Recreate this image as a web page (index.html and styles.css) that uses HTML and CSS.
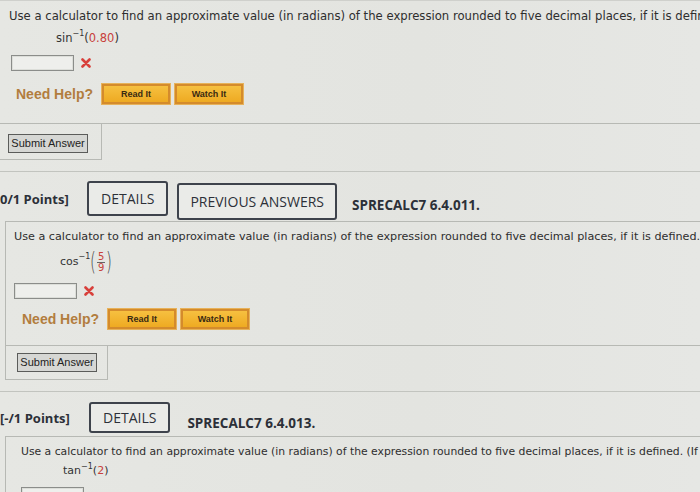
FILE: index.html
```html
<!DOCTYPE html>
<html lang="en">
<head>
<meta charset="utf-8">
<title>Inverse trig questions</title>
<link rel="stylesheet" href="styles.css">
</head>
<body>
<div class="page">
  <section class="q q-first">
    <div class="qbox">
      <p class="qtext">Use a calculator to find an approximate value (in radians) of the expression rounded to five decimal places, if it is defined.</p>
      <div class="expr">sin<sup>−1</sup>(<span class="red">0.80</span>)</div>
      <div class="answer">
        <span class="input"></span>
        <svg class="xmark" viewBox="0 0 10 10" width="10" height="10"><path d="M1.5 1.5 L8.5 8.5 M8.5 1.5 L1.5 8.5" stroke="#d8403b" stroke-width="2.6" stroke-linecap="round"/></svg>
      </div>
      <div class="help">
        <span class="need">Need Help?</span>
        <span class="hbtn">Read It</span>
        <span class="hbtn">Watch It</span>
      </div>
    </div>
    <div class="tab"><span class="submit">Submit Answer</span></div>
  </section>

  <div class="sep sep-first"></div>

  <section class="q q-mid">
    <div class="qhead">
      <span class="pts">0/1 Points]</span>
      <span class="tbtn">DETAILS</span>
      <span class="tbtn tbtn-wide">PREVIOUS ANSWERS</span>
      <span class="code">SPRECALC7 6.4.011.</span>
    </div>
    <div class="qbox">
      <p class="qtext">Use a calculator to find an approximate value (in radians) of the expression rounded to five decimal places, if it is defined.</p>
      <div class="expr expr-frac">cos<sup>−1</sup><span class="paren">(</span><span class="frac"><span class="red">5</span><span class="red bar">9</span></span><span class="paren">)</span></div>
      <div class="answer">
        <span class="input"></span>
        <svg class="xmark" viewBox="0 0 10 10" width="10" height="10"><path d="M1.5 1.5 L8.5 8.5 M8.5 1.5 L1.5 8.5" stroke="#d8403b" stroke-width="2.6" stroke-linecap="round"/></svg>
      </div>
      <div class="help">
        <span class="need">Need Help?</span>
        <span class="hbtn">Read It</span>
        <span class="hbtn">Watch It</span>
      </div>
    </div>
    <div class="tab"><span class="submit">Submit Answer</span></div>
  </section>

  <div class="sep"></div>

  <section class="q q-last">
    <div class="qhead">
      <span class="pts">[-/1 Points]</span>
      <span class="tbtn">DETAILS</span>
      <span class="code">SPRECALC7 6.4.013.</span>
    </div>
    <div class="qbox">
      <p class="qtext">Use a calculator to find an approximate value (in radians) of the expression rounded to five decimal places, if it is defined. (If it is not defined, enter UNDEFINED.)</p>
      <div class="expr">tan<sup>−1</sup>(<span class="red">2</span>)</div>
      <div class="answer">
        <span class="input"></span>
      </div>
    </div>
  </section>
</div>
</body>
</html>
```
FILE: styles.css
```css
html, body {
  margin: 0;
  padding: 0;
}
body {
  background: #e4e5e1;
  font-family: "DejaVu Sans", Verdana, sans-serif;
  color: #2b2b2b;
}
.page {
  width: 700px;
  height: 492px;
  overflow: hidden;
  background: linear-gradient(90deg, #e6e7e3 0%, #e3e4e0 60%, #e6e7e4 100%);
  border-top: 1px solid #cfd0cc;
  box-sizing: border-box;
}
.q {
  margin-left: 5px;
}
.q-first {
  margin-left: -3px;
}
.qbox {
  width: 900px;
  border: 1px solid #b7b9b4;
  border-right: none;
  padding: 7px 0 16px 8px;
}
.q-first .qbox {
  border-top: none;
  padding-top: 7px;
  padding-bottom: 19px;
  padding-left: 11px;
}
.q-last .qbox {
  padding-left: 15px;
}
.qtext {
  margin: 0;
  font-size: 11.2px;
  line-height: 16px;
  white-space: nowrap;
  color: #2e2e2e;
}
.q-first .qtext {
  font-size: 11.65px;
}
.q-last .qtext {
  font-size: 10.8px;
}
.expr {
  margin: 5px 0 0 47px;
  font-size: 11px;
  line-height: 18px;
  height: 18px;
  display: flex;
  align-items: center;
  color: #333;
}
.q-first .expr {
  font-size: 11.5px;
}
.q-last .expr {
  margin-top: 2px;
  margin-left: 42px;
}
.expr sup {
  font-size: 8px;
  line-height: 8px;
  align-self: flex-start;
  margin-top: 1px;
}
.red {
  color: #c8413b;
}
.expr-frac {
  height: 22px;
  margin-top: 6px;
  margin-left: 46px;
}
.expr-frac sup {
  margin-top: 2px;
}
.paren {
  font-size: 25px;
  line-height: 24px;
  font-weight: 300;
  color: #444;
  transform: scaleX(0.6);
  margin: 0 -2px;
}
.frac {
  display: inline-flex;
  flex-direction: column;
  align-items: center;
  font-size: 10px;
  line-height: 10px;
  padding: 0 1px;
}
.frac .bar {
  border-top: 1px solid #666;
  padding: 0 1px;
}
.answer {
  margin-top: 7px;
  display: flex;
  align-items: center;
  gap: 7px;
  height: 17px;
}
.q-mid .answer {
  margin-top: 9px;
}
.q-last .answer {
  margin-top: 6px;
}
.input {
  width: 61px;
  height: 14px;
  border: 1px solid #8b8d8a;
  background: #eeefec;
  box-shadow: inset 0 0 0 1px #dcded9;
}
.q-first .input {
  margin-left: 2px;
}
.xmark {
  display: block;
}
.help {
  margin-top: 13px;
  display: flex;
  align-items: center;
  height: 20px;
  margin-left: 7px;
}
.q-mid .help {
  margin-top: 10px;
  margin-left: 8px;
}
.need {
  font-family: "Liberation Sans", Arial, sans-serif;
  font-weight: bold;
  font-size: 14px;
  color: #b27d3e;
  margin-right: 9px;
}
.hbtn {
  display: flex;
  align-items: center;
  justify-content: center;
  width: 64px;
  height: 16px;
  margin-right: 5px;
  border: 2px solid #d48b2c;
  background: linear-gradient(#f6c040, #eeaa22);
  box-shadow: 0 0 0 1px #e7b25a;
  font-family: "Liberation Sans", Arial, sans-serif;
  font-weight: bold;
  font-size: 9px;
  color: #3a2a12;
}
.tab {
  width: 105px;
  border: 1px solid #b7b9b4;
  border-top: none;
  padding: 8px 0 7px 10px;
  box-sizing: border-box;
  height: 36px;
}
.q-mid .tab {
  width: 103px;
  padding: 5px 0 8px 11px;
  height: 34px;
}
.submit {
  display: inline-flex;
  align-items: center;
  justify-content: center;
  width: 78px;
  height: 17px;
  border: 1px solid #5b5c5a;
  background: #d6d7d4;
  font-family: "Liberation Sans", Arial, sans-serif;
  font-size: 11px;
  color: #222;
  box-sizing: content-box;
}
.sep {
  height: 0;
  border-top: 1px solid #c2c4bf;
  margin-top: 11px;
}
.sep-first {
  margin-top: 11px;
}
.qhead {
  display: flex;
  align-items: center;
  height: 35px;
  padding: 9px 0 5px 0;
  margin-left: -5px;
  font-family: "Open Sans", "DejaVu Sans", sans-serif;
  color: #2c3038;
}
.q-last .qhead {
  height: 31px;
  padding-top: 10px;
  padding-bottom: 3px;
}
.pts {
  font-weight: bold;
  font-size: 13px;
  margin-right: 17px;
  width: 70px;
  white-space: nowrap;
}
.q-last .pts {
  margin-right: 19px;
}
.tbtn {
  display: flex;
  align-items: center;
  justify-content: center;
  height: 100%;
  box-sizing: border-box;
  padding: 0 12px;
  border: 2px solid #3e434c;
  border-radius: 3px;
  background: #eaebe8;
  font-size: 14px;
  font-weight: 500;
  margin-right: 9px;
  white-space: nowrap;
}
.tbtn-wide {
  padding: 0 11px;
  height: 37px;
  align-self: flex-start;
  margin-top: 2px;
}
.code {
  margin-left: 6px;
  font-weight: bold;
  font-size: 13.5px;
  white-space: nowrap;
  padding-top: 12px;
}
.q-last .code {
  margin-left: 8px;
  padding-top: 10px;
}
```
